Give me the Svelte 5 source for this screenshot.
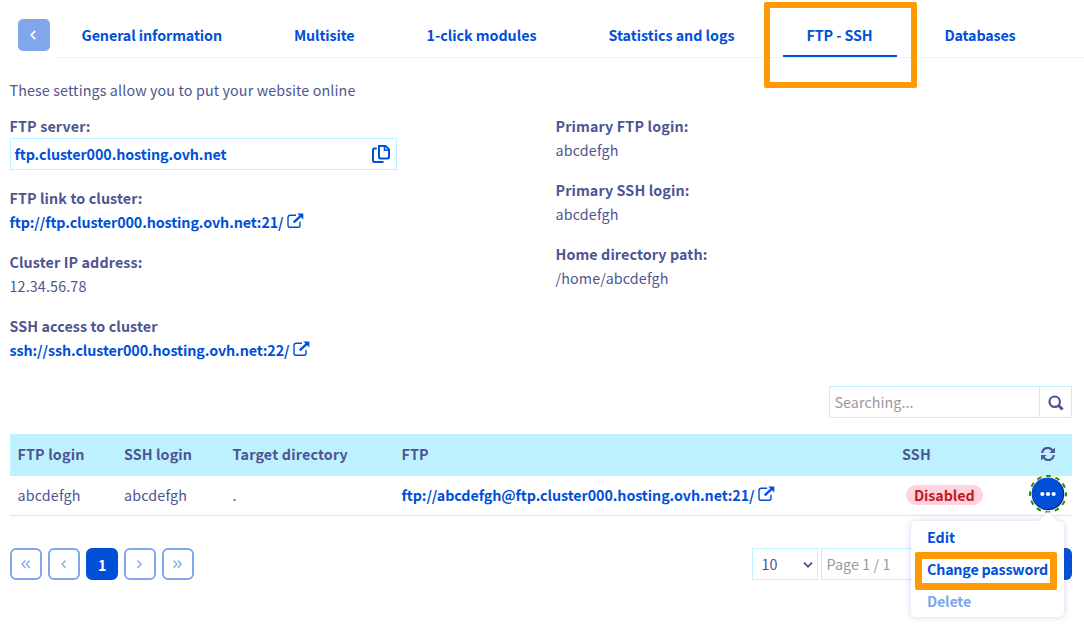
<script>
  const tabs = [
    { label: 'General information', w: 140.5 },
    { label: 'Multisite', w: 60.5 },
    { label: '1-click modules', w: 110 },
    { label: 'Statistics and logs', w: 126 },
    { label: 'FTP - SSH', w: 66, active: true },
    { label: 'Databases', w: 71 }
  ];

  // Spreads the letters of a label so that it fills the given width.
  function fit(node, width) {
    const apply = () => {
      node.style.letterSpacing = '0px';
      const natural = node.getBoundingClientRect().width;
      node.style.letterSpacing = `${(width - natural) / node.textContent.length}px`;
    };
    apply();
    document.fonts?.ready.then(apply);
  }
</script>

{#snippet t(text, w, cls = '')}<span class="t {cls}" use:fit={w}>{text}</span>{/snippet}

{#snippet ext()}
  <svg class="ext" width="17" height="16" viewBox="0 0 17 16">
    <path d="M9 2.2H3.2Q1 2.2 1 4.400V12.200Q1 14.300 3.200 14.300H10.800Q13 14.300 13 12.200V8.800" fill="none" stroke="currentColor" stroke-width="1.400" />
    <path d="M6.700 9.300L13.800 2.800" stroke="currentColor" stroke-width="2.300" />
    <path d="M10.200.6H16.300V6.600Z" fill="currentColor" />
  </svg>
{/snippet}

{#snippet chev(kind)}
  <svg width="12" height="12" viewBox="0 0 12 12" fill="none" stroke="currentColor" stroke-width="1.300">
    {#if kind === 'first'}<path d="M5.400 2.500L2 6.300L5.400 10M9.700 2.500L6.300 6.300L9.700 10" />
    {:else if kind === 'prev'}<path d="M7.700 2.500L4 6.300L7.700 10" />
    {:else if kind === 'next'}<path d="M3.500 2.500L7.200 6.300L3.500 10" />
    {:else}<path d="M1.500 2.500L4.900 6.300L1.500 10M5.800 2.500L9.200 6.300L5.800 10" />{/if}
  </svg>
{/snippet}

<main>
  <header>
    <button class="back" aria-label="Back">
      <svg width="12" height="12" viewBox="0 0 12 12" fill="none" stroke="#fff" stroke-width="1.700"><path d="M8.300 1.900L4.200 6L8.300 10.100" /></svg>
    </button>
    <nav>
      {#each tabs as tab}
        <a class:active={tab.active}>{@render t(tab.label, tab.w)}{#if tab.active}<i class="mark"></i>{/if}</a>
      {/each}
    </nav>
  </header>

  <p class="intro">{@render t('These settings allow you to put your website online', 346)}</p>

  <section class="details">
    <dl>
      <dt>{@render t('FTP server:', 81)}</dt>
      <dd class="copy">{@render t('ftp.cluster000.hosting.ovh.net', 212, 'link')}
        <svg width="18" height="18" viewBox="0 0 18 18" fill="none" stroke="#0050d7" stroke-width="2">
          <path d="M7 1H13.500L17 4.500V12Q17 13.500 15.500 13.500H8.500Q7 13.500 7 12Z" />
          <path d="M12.500 1V5.300H17" stroke-width="1.500" />
          <path d="M4.800 3.500H2.500Q1 3.500 1 5V15.500Q1 17 2.500 17H11.500" />
        </svg>
      </dd>
      <dt>{@render t('FTP link to cluster:', 133)}</dt>
      <dd>{@render t('ftp://ftp.cluster000.hosting.ovh.net:21/', 274, 'link')}{@render ext()}</dd>
      <dt>{@render t('Cluster IP address:', 133)}</dt>
      <dd>{@render t('12.34.56.78', 77)}</dd>
      <dt>{@render t('SSH access to cluster', 148)}</dt>
      <dd>{@render t('ssh://ssh.cluster000.hosting.ovh.net:22/', 280, 'link')}{@render ext()}</dd>
    </dl>
    <dl>
      <dt>{@render t('Primary FTP login:', 133)}</dt>
      <dd>{@render t('abcdefgh', 63)}</dd>
      <dt>{@render t('Primary SSH login:', 134)}</dt>
      <dd>{@render t('abcdefgh', 63)}</dd>
      <dt>{@render t('Home directory path:', 152)}</dt>
      <dd>{@render t('/home/abcdefgh', 113)}</dd>
    </dl>
  </section>

  <div class="search">
    <div class="field">{@render t('Searching...', 79)}</div>
    <div class="go">
      <svg width="16" height="16" viewBox="0 0 16 16" fill="none" stroke="#4d5592"><circle cx="6.700" cy="6.700" r="5.200" stroke-width="2.200" /><path d="M10.500 10.500L14.600 14.600" stroke-width="2.800" /></svg>
    </div>
  </div>

  <div class="table">
    <div class="row head">
      <span>{@render t('FTP login', 67)}</span>
      <span>{@render t('SSH login', 68)}</span>
      <span>{@render t('Target directory', 115.5)}</span>
      <span>{@render t('FTP', 27)}</span>
      <span>{@render t('SSH', 29)}</span>
      <span class="act">
        <svg width="14" height="14" viewBox="0 0 14 14" fill="none" stroke="#4d5592" stroke-width="2.200">
          <path d="M1.200 6A5.600 5.600 0 0 1 11.300 3.300M12.800 8A5.600 5.600 0 0 1 2.700 10.700" />
          <path d="M13.900.4V6H8.400ZM.1 13.600V8H5.600Z" fill="#4d5592" stroke="none" />
        </svg>
      </span>
    </div>
    <div class="row">
      <span>{@render t('abcdefgh', 63)}</span>
      <span>{@render t('abcdefgh', 63)}</span>
      <span>{@render t('.', 4)}</span>
      <span>{@render t('ftp://abcdefgh@ftp.cluster000.hosting.ovh.net:21/', 353, 'link')}{@render ext()}</span>
      <span><b class="badge">{@render t('Disabled', 60.5)}</b></span>
      <span class="act">
        <button class="dots" aria-label="Actions">
          <svg width="40" height="40" viewBox="0 0 40 40">
            <circle cx="20" cy="20" r="18" fill="none" stroke="#2a8a00" stroke-width="2" stroke-dasharray="4.700 4.725" stroke-dashoffset="2.350" />
            <circle cx="20" cy="20" r="16.300" fill="#00248c" />
            <circle cx="19.500" cy="19.500" r="15.700" fill="#0050d7" />
            <g fill="#fff"><circle cx="14.300" cy="20" r="2.100" /><circle cx="20" cy="20" r="2.100" /><circle cx="25.700" cy="20" r="2.100" /></g>
          </svg>
        </button>
      </span>
    </div>
  </div>

  <footer>
    <div class="pages">
      <button>{@render chev('first')}</button>
      <button>{@render chev('prev')}</button>
      <button class="current">{@render t('1', 8)}</button>
      <button>{@render chev('next')}</button>
      <button>{@render chev('last')}</button>
    </div>
    <div class="size">{@render t('10', 16)}
      <svg width="10" height="8" viewBox="0 0 10 8" fill="none" stroke="#4d5592" stroke-width="1.800"><path d="M1 1.700L5 5.700L9 1.700" /></svg>
    </div>
    <div class="jump">{@render t('Page 1 / 1', 64)}</div>
    <div class="ok"></div>
  </footer>

  <div class="menu">
    <svg class="tip" width="20" height="11" viewBox="0 0 20 11"><path d="M0 11L10 1L20 11Z" fill="#fff" /><path d="M0 10L10 .5L20 10" fill="none" stroke="#e9e9f8" /></svg>
    <a>{@render t('Edit', 28)}</a>
    <a class="boxed">{@render t('Change password', 121)}<i class="mark"></i></a>
    <a class="off">{@render t('Delete', 44)}</a>
  </div>
</main>

<style>
  :global(body) { background: #fff; }
  main {
    position: relative;
    box-sizing: border-box;
    width: 1084px;
    height: 636px;
    overflow: hidden;
    font: 14.300px/24px "Noto Sans CJK SC", "Noto Sans", sans-serif;
    color: #4d5592;
  }
  .t { display: inline-block; white-space: nowrap; line-height: 24px; }
  .link { color: #0050d7; font-weight: 700; }
  svg { display: block; flex: none; }
  header { display: flex; height: 58px; }
  .back {
    width: 32px; height: 32px; margin: 19px 8px 0 18px; padding: 0 0 0 9px; border: 0;
    border-radius: 5px; background: #80a7eb;
  }
  nav { flex: 1; display: flex; gap: 24px; box-sizing: border-box; border-bottom: 1px solid #e8f3fb; margin-left: -.5px; }
  nav a {
    position: relative; box-sizing: border-box; height: 57px; padding: 23px 24px 0;
    color: #0050d7; font-weight: 700; border-bottom: 2px solid transparent;
  }
  nav a.active { border-color: #0050d7; }
  nav a .mark {
    position: absolute; left: -19px; top: 2px; width: 141px; height: 74px;
    border: 6px solid #ff9a05; border-width: 6px; border-radius: 2px;
  }
  .intro { margin: 20px 0 0 9.5px; height: 24px; }
  .details { display: grid; grid-template-columns: 546px 1fr; margin: 12px 0 0 10px; height: 272px; }
  dl, dd { margin: 0; }
  dt { height: 24px; font-weight: 700; }
  dd { display: flex; height: 24px; margin-bottom: 16px; }
  .details .t { margin-left: -.5px; }
  dd.copy {
    box-sizing: border-box; width: 387px; height: 32px; padding: 3px 6px 0 4px;
    justify-content: space-between; border: 1px solid #bef1ff;
  }
  .copy svg { margin-top: 3px; }
  .ext { margin: 3px 0 0 3.5px; color: #0050d7; }
  .search {
    display: flex; box-sizing: border-box; width: 243px; height: 32px; margin-left: 829px;
    border: 1px solid #bef1ff; border-radius: 1px;
  }
  .field { flex: 1; padding: 3px 4.5px; color: #999; }
  .go { width: 32px; border-left: 1px solid #bef1ff; padding: 8px 0 0 8px; box-sizing: border-box; }
  .table { width: 1062px; margin: 16px 0 0 10px; }
  .row {
    display: grid; grid-template-columns: 106.500px 108.500px 169px 500.500px 1fr 48px;
    box-sizing: border-box; height: 40px; padding: 7px 0 0 7.5px; border-bottom: 1px solid #bef1ff;
  }
  .head { height: 42px; padding-top: 8px; background: #bef1ff; font-weight: 700; }
  .row > span { display: flex; }
  .head .act { padding: 5px 0 0 17px; }
  .act { box-sizing: border-box; }
  .badge {
    box-sizing: border-box; width: 77px; height: 20px; margin: 2px 0 0 4px; padding: 0 8px;
    border-radius: 10px; line-height: 20px; background: #ffd2dd; color: #c11b1b; font-weight: 700;
  }
  .badge .t { line-height: 20px; }
  .dots { margin: -9px 0 0 4px; padding: 0; border: 0; background: none; height: 40px; }
  footer { display: flex; align-items: flex-start; margin: 32px 12px 0 10px; height: 32px; }
  .pages { display: flex; gap: 6px; margin-right: 558px; }
  .pages button {
    display: grid; place-items: center; box-sizing: border-box; width: 32px; height: 32px; padding: 0;
    border: 2px solid #80a7eb; border-radius: 6px; background: #fff; color: #80a7eb; font: inherit;
  }
  .pages .current { border-color: #0050d7; background: #0050d7; color: #fff; font-weight: 700; padding-top: 1px; }
  .size, .jump { box-sizing: border-box; height: 32px; border: 1px solid #bef1ff; }
  .size { display: flex; width: 66px; padding: 3px 4px 0 8.5px; justify-content: space-between; }
  .size svg { margin-top: 9px; }
  .jump { width: 100px; margin-left: 3px; padding: 3px 4.5px; color: #999; }
  .ok { width: 32px; height: 32px; margin-left: auto; border-radius: 6px; background: #0050d7; }
  .menu {
    position: absolute; left: 911px; top: 521px; box-sizing: border-box; width: 153px; height: 96px;
    padding-left: 16px; border-radius: 5px; background: #fff; box-shadow: 0 0 6px rgba(77, 77, 190, .25);
  }
  .tip { position: absolute; left: 127px; top: -10px; }
  .menu a { display: block; position: relative; height: 28px; padding-top: 4px; color: #0050d7; font-weight: 700; }
  .menu .off { color: #80a7eb; }
  .boxed .mark {
    position: absolute; left: -12px; top: -1px; width: 128px; height: 24px;
    border: 7px solid #ff9a05; border-radius: 2px;
  }
</style>
